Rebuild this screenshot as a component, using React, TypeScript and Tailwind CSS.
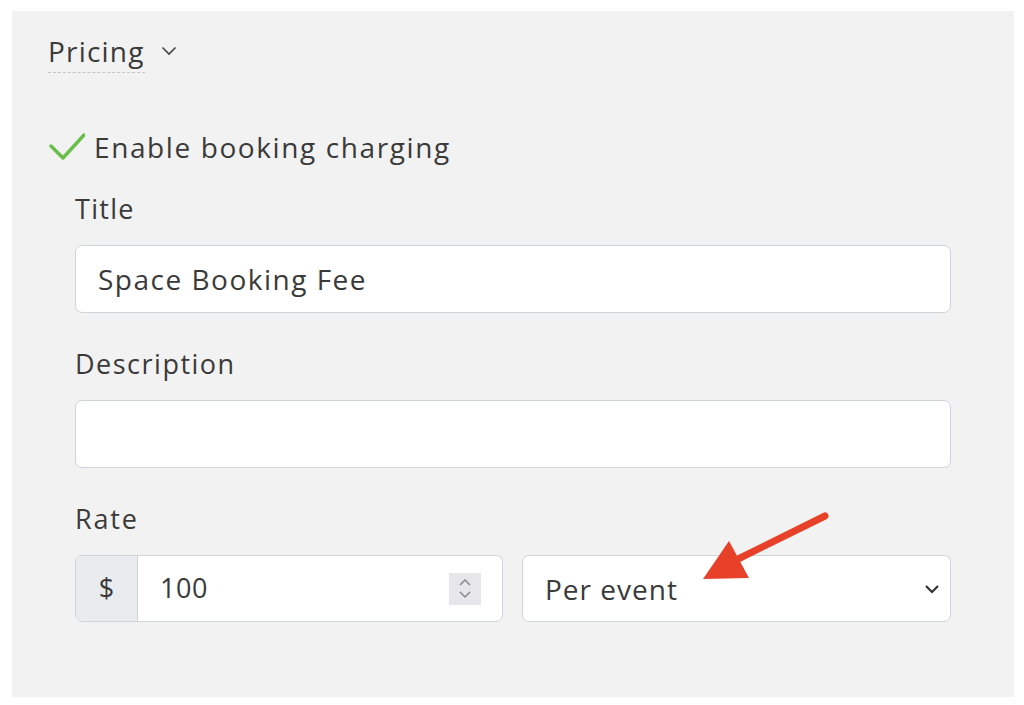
import React from "react";

const font = { fontFamily: '"Open Sans", "Liberation Sans", sans-serif' };

export default function App() {
  return (
    <div className="w-[1024px] h-[705px] bg-white overflow-hidden" style={font}>
      <div className="relative ml-[12px] mt-[11px] w-[1002px] h-[686px] bg-[#f2f2f2] pl-[36px] pt-[20px] text-[#3a3a3a]">
        <div className="inline-flex items-center gap-[16px]">
          <span className="h-[42px] leading-[40px] text-[28px] tracking-[1.2px] border-b border-dashed border-[#c4c4c4]">Pricing</span>
          <svg width="16" height="10" viewBox="0 0 16 10" className="mb-[3px]">
            <path d="M1.5 1.5 L8 8 L14.5 1.5" fill="none" stroke="#444" strokeWidth="1.6" />
          </svg>
        </div>

        <div className="mt-[54px] flex items-center h-[40px] gap-[9px]">
          <svg width="36" height="28" viewBox="0 0 36 28" className="ml-[1px]">
            <path d="M2 13 L14 25 L35 2" fill="none" stroke="#6abf4b" strokeWidth="3.5" strokeLinecap="round" strokeLinejoin="round" />
          </svg>
          <span className="text-[28px] tracking-[1.6px] leading-[40px]">Enable booking charging</span>
        </div>

        <div className="pl-[27px] w-[903px]">
          <div className="mt-[24px] h-[36px] leading-[36px] text-[27px] tracking-[1.3px]">Title</div>
          <div className="mt-[18px] h-[68px] bg-white border border-[#cfd4d9] rounded-[7px] flex items-center px-[22px] text-[28px] tracking-[1.5px]">
            Space Booking Fee
          </div>

          <div className="mt-[33px] h-[36px] leading-[36px] text-[27px] tracking-[1.5px]">Description</div>
          <div className="mt-[18px] h-[68px] bg-white border border-[#cfd4d9] rounded-[7px]" />

          <div className="mt-[33px] h-[36px] leading-[36px] text-[27px] tracking-[1.8px]">Rate</div>
          <div className="mt-[18px] flex gap-[19px] h-[67px]">
            <div className="w-[428px] flex border border-[#cfd4d9] rounded-[7px] overflow-hidden bg-white">
              <div className="w-[62px] bg-[#e9ecef] border-r border-[#cfd4d9] flex items-center justify-center text-[27px]">$</div>
              <div className="flex-1 flex items-center pl-[22px] pr-[21px] text-[27px] tracking-[0.5px]">
                <span className="flex-1">100</span>
                <div className="w-[32px] h-[32px] bg-[#e7e7eb] flex flex-col items-center justify-center gap-[5px]">
                  <svg width="12" height="7" viewBox="0 0 12 7">
                    <path d="M1 6 L6 1 L11 6" fill="none" stroke="#8a8a8e" strokeWidth="1.5" />
                  </svg>
                  <svg width="12" height="7" viewBox="0 0 12 7">
                    <path d="M1 1 L6 6 L11 1" fill="none" stroke="#8a8a8e" strokeWidth="1.5" />
                  </svg>
                </div>
              </div>
            </div>
            <div className="flex-1 flex items-center bg-white border border-[#cfd4d9] rounded-[7px] pl-[22px] pr-[10px] text-[28px] tracking-[1px]">
              <span className="flex-1">Per event</span>
              <svg width="16" height="10" viewBox="0 0 16 10">
                <path d="M2 2 L8 8 L14 2" fill="none" stroke="#333" strokeWidth="2.2" />
              </svg>
            </div>
          </div>
        </div>

        <svg className="absolute left-0 top-0 pointer-events-none" width="1002" height="686" viewBox="0 0 1002 686">
          <g transform="translate(-12,-11)">
            <line x1="825" y1="516" x2="730" y2="563" stroke="#e8412a" strokeWidth="7" strokeLinecap="round" />
            <polygon points="703,579 729,541 749,578" fill="#e8412a" />
          </g>
        </svg>
      </div>
    </div>
  );
}
